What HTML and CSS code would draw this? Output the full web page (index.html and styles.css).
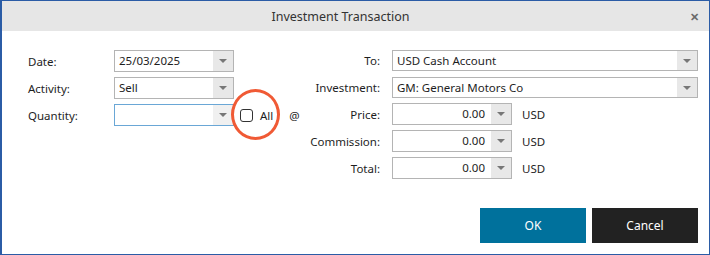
FILE: index.html
```html
<!DOCTYPE html>
<html lang="en">
<head>
  <meta charset="UTF-8" />
  <title>Investment Transaction</title>
  <link rel="stylesheet" href="styles.css">
</head>
<body>

<div class="dialog">
  <div class="titlebar">
    <span class="title">Investment Transaction</span>
    <span class="close">&#x2715;</span>
  </div>

  <div class="content">
    <!-- left side -->
    <div class="left">
      <label>Date:</label>
      <div class="combo"><span class="val">25/03/2025</span><span class="arrow"></span></div>

      <label>Activity:</label>
      <div class="combo"><span class="val">Sell</span><span class="arrow"></span></div>

      <label>Quantity:</label>
      <div class="qty-row">
        <div class="combo focus"><span class="val"></span><span class="arrow"></span></div>
        <span class="check"></span>
        <span class="all">All</span>
        <span class="at">@</span>
        <span class="ring"></span>
      </div>
    </div>

    <!-- right side -->
    <div class="right">
      <label>To:</label>
      <div class="combo wide"><span class="val">USD Cash Account</span><span class="arrow"></span></div>

      <label>Investment:</label>
      <div class="combo wide"><span class="val">GM: General Motors Co</span><span class="arrow"></span></div>

      <label>Price:</label>
      <div class="amount-row">
        <div class="combo num"><span class="val">0.00</span><span class="arrow"></span></div>
        <span class="cur">USD</span>
      </div>

      <label>Commission:</label>
      <div class="amount-row">
        <div class="combo num"><span class="val">0.00</span><span class="arrow"></span></div>
        <span class="cur">USD</span>
      </div>

      <label>Total:</label>
      <div class="amount-row">
        <div class="combo num"><span class="val">0.00</span><span class="arrow"></span></div>
        <span class="cur">USD</span>
      </div>
    </div>
  </div>

  <div class="buttons">
    <button class="ok">OK</button>
    <button class="cancel">Cancel</button>
  </div>
</div>

</body>
</html>
```

FILE: styles.css
```css
* {
  box-sizing: border-box;
}

body {
  margin: 0;
  font-family: "Noto Sans", "Open Sans", sans-serif;
  font-size: 11.5px;
  color: #1e1e1e;
  background: #fff;
}

.dialog {
  width: 710px;
  height: 255px;
  border: 1px solid #2b5ca6;
  border-left-width: 2px;
  background: #fff;
  display: flex;
  flex-direction: column;
}

.titlebar {
  height: 30px;
  background: #e6e6e6;
  display: flex;
  align-items: center;
  justify-content: center;
  position: relative;
  padding-right: 30px;
}

.title {
  font-size: 12.5px;
  color: #333;
}

.close {
  position: absolute;
  right: 10px;
  top: 8px;
  font-size: 11px;
  font-weight: bold;
  color: #6a6a6a;
}

.content {
  display: flex;
  padding: 19px 0 0 26px;
}

.left,
.right {
  display: grid;
  grid-auto-rows: 22px;
  row-gap: 5px;
  align-items: center;
}

.left {
  grid-template-columns: 86px auto;
  width: 282px;
}

.right {
  grid-template-columns: 70px auto;
  column-gap: 12px;
  margin-top: -1px;
}

.right label {
  text-align: right;
}

.combo {
  width: 120px;
  height: 22px;
  border: 1px solid #b4b4b4;
  display: flex;
  align-items: stretch;
  background: #fff;
}

.combo.wide {
  width: 306px;
  height: 21px;
}

.combo.focus {
  border-color: #6aa7d6;
}

.val {
  flex: 1;
  padding: 0 4px;
  line-height: 20px;
  white-space: nowrap;
}

.num .val {
  text-align: right;
  padding-right: 6px;
}

.arrow {
  width: 20px;
  background: #e8e8e8;
  position: relative;
}

.focus .arrow {
  background: #f0f0f0;
}

.arrow::after {
  content: "";
  position: absolute;
  left: 6px;
  top: 8px;
  border-left: 4px solid transparent;
  border-right: 4px solid transparent;
  border-top: 4px solid #777;
}

.qty-row,
.amount-row {
  display: flex;
  align-items: center;
  position: relative;
}

.check {
  width: 13px;
  height: 13px;
  border: 1px solid #333;
  border-radius: 3px;
  margin-left: 6px;
}

.all {
  margin-left: 7px;
}

.at {
  margin-left: 16px;
}

/* red highlight ring round the checkbox */
.ring {
  position: absolute;
  left: 117px;
  top: -15px;
  width: 49px;
  height: 51px;
  border: 3px solid #f05a35;
  border-radius: 50%;
}

.cur {
  margin-left: 10px;
}

.buttons {
  margin-top: auto;
  display: flex;
  justify-content: flex-end;
  gap: 6px;
  padding: 0 11px 11px 0;
}

button {
  width: 106px;
  height: 35px;
  border: none;
  color: #fff;
  font-family: "Noto Sans", "Open Sans", sans-serif;
  font-size: 12px;
}

.ok {
  background: #00719c;
}

.cancel {
  background: #222;
}
```
